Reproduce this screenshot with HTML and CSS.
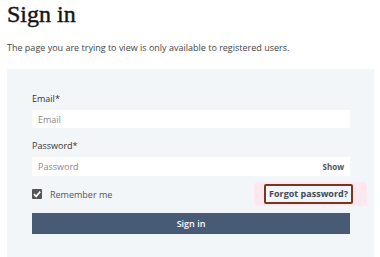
FILE: index.html
```html
<!DOCTYPE html>
<html lang="en">
<head>
<meta charset="utf-8">
<link rel="stylesheet" href="styles.css">
</head>
<body>
<main class="page">
  <h1 class="title">Sign in</h1>
  <p class="intro">The page you are trying to view is only available to registered users.</p>
  <form class="panel">
    <label class="label" for="email">Email*</label>
    <div class="field"><input id="email" class="input" type="text" placeholder="Email"></div>
    <label class="label" for="pw">Password*</label>
    <div class="field tall"><input id="pw" class="input" type="password" placeholder="Password"><span class="show">Show</span></div>
    <div class="row">
      <label class="remember"><span class="check"><svg viewBox="0 0 10 10" width="10" height="10"><path d="M2 5.2 L4.2 7.4 L8.2 2.6" fill="none" stroke="#fff" stroke-width="1.7"/></svg></span>Remember me</label>
      <a class="forgot" href="#">Forgot password?</a>
    </div>
    <button class="submit" type="button">Sign in</button>
  </form>
</main>
</body>
</html>
```
FILE: styles.css
```css
* { box-sizing: border-box; }
body { margin: 0; background: #fff; font-family: "Open Sans", sans-serif; color: #333; }
.page { padding: 0 6px 0 7px; }
.title { font-family: "Liberation Serif", serif; font-weight: normal; font-size: 24px; line-height: 28px; margin: 0; color: #151515; -webkit-text-stroke: 0.45px #151515; }
.intro { font-size: 9px; margin: 14px 0 0; line-height: 12px; color: #444; }
.panel { background: #f3f6f9; margin-top: 15px; padding: 24px 24px 23px 25px; display: flex; flex-direction: column; }
.label { font-size: 9px; line-height: 12px; color: #333; }
.field { position: relative; background: #fff; height: 18px; margin: 5px 0 12px; display: flex; align-items: center; }
.field.tall { height: 19px; margin-bottom: 0; }
.input { border: 0; background: transparent; font: inherit; font-size: 9px; padding: 0 0 0 6px; width: 100%; height: 100%; outline: none; }
.input::placeholder { color: #888; }
.show { position: absolute; right: 6px; font-size: 8px; font-weight: 700; color: #555; }
.row { display: flex; justify-content: space-between; align-items: center; margin-top: 8px; }
.remember { display: flex; align-items: center; gap: 8px; font-size: 9px; color: #555; }
.check { width: 10px; height: 10px; background: #555; border-radius: 1px; display: flex; }
.forgot { font-size: 9px; line-height: 12px; font-weight: 700; color: #3d4a5e; text-decoration: none; border: 2px solid #7a3520; border-radius: 2px; padding: 2px 3px; margin-right: -3px; box-shadow: 0 0 0 2px #fde8f0, -8px 0 0 2px #fde8f0, 12px 0 0 2px #fde8f0; }
.submit { margin-top: 9px; height: 21px; background: #475a76; color: #fff; border: 0; font: inherit; font-size: 9px; font-weight: 600; }
```
